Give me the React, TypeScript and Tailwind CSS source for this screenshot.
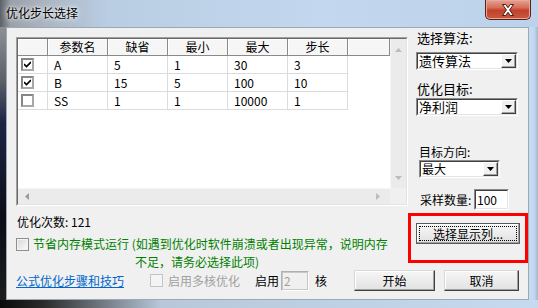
import React from "react";

const cols = [30, 60, 60, 60, 60, 60];
const headers = ["", "参数名", "缺省", "最小", "最大", "步长"];
const rows = [
  { checked: true, v: ["A", "5", "1", "30", "3"] },
  { checked: true, v: ["B", "15", "5", "100", "10"] },
  { checked: false, v: ["SS", "1", "1", "10000", "1"] },
];

function ListCheck({ checked }: { checked: boolean }) {
  return (
    <div className="w-[13px] h-[13px] border-2 border-[#868686] border-b-[#a8a8a8] border-r-[#a8a8a8] bg-white flex items-center justify-center">
      {checked && (
        <svg width="7" height="7" viewBox="0 0 7 7">
          <path d="M0 3 L2.5 5.5 L7 1" stroke="#000" strokeWidth="1.6" fill="none" />
        </svg>
      )}
    </div>
  );
}

function Select({ value, className, big }: { value: string; className: string; big?: boolean }) {
  return (
    <div className={`h-[18px] flex border border-[#8a8a8a] border-b-white border-r-white ${className}`}>
      <div className="flex-1 flex border border-[#404040] border-b-[#e3e3e3] border-r-[#e3e3e3] bg-white">
        <div className={`flex-1 pl-[1px] leading-[14px] ${big ? "text-[13px]" : "text-[12px]"}`}>{value}</div>
        <div className="w-[15px] h-[14px] bg-[#f0f0f0] border border-white border-b-[#404040] border-r-[#404040] flex items-center justify-center shadow-[inset_-1px_-1px_0_#a0a0a0]">
          <svg width="7" height="4" viewBox="0 0 7 4">
            <path d="M0 0 H7 L3.5 4 Z" fill="#000" />
          </svg>
        </div>
      </div>
    </div>
  );
}

function Btn({ children, className }: { children: React.ReactNode; className: string }) {
  return (
    <div
      className={`h-[21px] flex items-center justify-center text-[12px] leading-[14px] border border-[#d8d8d8] border-b-[#404040] border-r-[#404040] shadow-[inset_-1px_-1px_0_#a0a0a0,inset_1px_1px_0_#ffffff] bg-[linear-gradient(to_bottom,#f6f6f6_0%,#ececec_50%,#e2e2e2_100%)] ${className}`}
    >
      {children}
    </div>
  );
}

export default function App() {
  return (
    <div className="w-[538px] h-[308px] flex flex-col overflow-hidden font-['Noto_Sans_CJK_SC',sans-serif] text-[12px] text-black">
      {/* Title bar */}
      <div className="h-[27px] flex items-start bg-[linear-gradient(to_right,#5c6068_0%,#9aa0a8_2%,#aab4c0_8%,#b9cde3_20%,#c3d8ee_60%,#bcd2ea_100%)]">
        <div className="ml-[6px] mt-[6px] text-[12px] leading-[14px] [text-shadow:0_0_6px_#ffffff,0_0_3px_#ffffff]">
          优化步长选择
        </div>
        <div className="ml-auto mr-[7px] w-[46px] h-[20px] rounded-b-[5px] border border-t-0 border-[#5b1f17] bg-[linear-gradient(to_bottom,#e3a493_0%,#d66d58_40%,#c2402a_55%,#c85a42_100%)] shadow-[inset_0_0_0_1px_#e9a898] flex items-center justify-center">
          <svg width="14" height="12" viewBox="0 0 14 12">
            <path
              d="M1.5 0.5h3.2l2.3 3.2 2.3-3.2h3.2l-3.9 5.5 3.9 5.5h-3.2l-2.3-3.2-2.3 3.2h-3.2l3.9-5.5z"
              fill="#ffffff"
              stroke="#4a1c14"
              strokeWidth="1"
            />
          </svg>
        </div>
      </div>

      <div className="flex flex-1">
        <div className="w-[6px] bg-[linear-gradient(to_bottom,#8c9096_0%,#5a5f68_20%,#1c2446_35%,#0b0e18_70%,#1c1c1c_100%)]" />

        {/* Client area */}
        <div className="w-[523px] border border-[#9aa8b8] bg-[#f0f0f0] flex flex-col pl-[9px]">
          {/* Top section */}
          <div className="flex items-start">
            {/* List view */}
            <div className="mt-[9px] w-[392px] h-[169px] border border-[#a0a0a0] border-b-white border-r-white">
              <div className="w-full h-full border border-[#696969] border-b-[#e3e3e3] border-r-[#e3e3e3] flex flex-col bg-white">
                <div className="flex flex-1 min-h-0">
                  <div className="w-[372px] flex flex-col">
                    <div className="h-[17px] flex bg-[#f6f6f6] border-b border-[#8a8a8a]">
                      {headers.map((h, i) => (
                        <div
                          key={i}
                          style={{ width: cols[i] }}
                          className="h-full flex items-center justify-center border-r border-[#8a8a8a] shadow-[inset_1px_1px_0_#ffffff] leading-[14px]"
                        >
                          {h}
                        </div>
                      ))}
                      <div className="flex-1 h-full border-r border-[#8a8a8a] shadow-[inset_1px_1px_0_#ffffff]" />
                    </div>
                    {rows.map((r, ri) => (
                      <div key={ri} className="h-[18px] flex">
                        <div className="w-[30px] h-full border-r border-b border-[#dcdcdc] flex items-center pl-[3px]">
                          <ListCheck checked={r.checked} />
                        </div>
                        {r.v.map((c, ci) => (
                          <div
                            key={ci}
                            className="w-[60px] h-full border-r border-b border-[#dcdcdc] pl-[6px] leading-[17px]"
                          >
                            {c}
                          </div>
                        ))}
                      </div>
                    ))}
                  </div>
                  <div className="w-[16px] bg-[#ebebeb] border-l border-[#f6f6f6] flex flex-col justify-between items-center pt-[9px] pb-[8px]">
                    <svg width="7" height="4" viewBox="0 0 7 4">
                      <path d="M0 4 H7 L3.5 0 Z" fill="#bcbcbc" />
                    </svg>
                    <svg width="7" height="4" viewBox="0 0 7 4">
                      <path d="M0 0 H7 L3.5 4 Z" fill="#bcbcbc" />
                    </svg>
                  </div>
                </div>
                <div className="h-[16px] flex">
                  <div className="w-[372px] bg-[#ebebeb] border-t border-[#f6f6f6] flex items-center justify-between pl-[7px] pr-[10px]">
                    <svg width="4" height="7" viewBox="0 0 4 7">
                      <path d="M4 0 V7 L0 3.5 Z" fill="#9a9a9a" />
                    </svg>
                    <svg width="4" height="7" viewBox="0 0 4 7">
                      <path d="M0 0 V7 L4 3.5 Z" fill="#bcbcbc" />
                    </svg>
                  </div>
                  <div className="w-[16px] bg-[#f0f0f0]" />
                </div>
              </div>
            </div>

            {/* Right panel */}
            <div className="ml-[8px] w-[105px] flex flex-col pt-[3px]">
              <div className="h-[14px] leading-[14px] text-[13px] pl-[1px]">选择算法:</div>
              <Select value="遗传算法" big className="mt-[7px] w-[102px]" />
              <div className="mt-[12px] h-[14px] leading-[14px] text-[13px] pl-[1px]">优化目标:</div>
              <Select value="净利润" big className="mt-[2px] w-[102px]" />
              <div className="mt-[30px] h-[12px] leading-[12px] pl-[3px]">目标方向:</div>
              <Select value="最大" className="mt-[2px] ml-[3px] w-[81px]" />
              <div className="mt-[11px] h-[21px] flex items-center">
                <div className="w-[58px] pl-[4px] leading-[14px]">采样数量:</div>
                <div className="w-[35px] h-[21px] flex border border-[#8a8a8a] border-b-white border-r-white">
                  <div className="flex-1 border border-[#404040] border-b-[#e3e3e3] border-r-[#e3e3e3] bg-white pl-[1px] leading-[17px]">
                    100
                  </div>
                </div>
              </div>
            </div>
          </div>

          {/* Middle section */}
          <div className="flex items-start">
            <div className="w-[392px] flex flex-col">
              <div className="mt-[6px] h-[12px] leading-[12px] pl-[1px]">
                优化次数: 121
              </div>
              <div className="mt-[6px] flex items-start">
                <div className="mt-[4px] w-[13px] h-[13px] border border-[#8f8f8f] bg-[linear-gradient(135deg,#d8d8d8,#fbfbfb)] shadow-[inset_0_0_0_1px_#f4f4f4]" />
                <div className="ml-[4px] flex flex-col text-[#008000]">
                  <div className="h-[19px] leading-[19px] whitespace-nowrap">
                    节省内存模式运行 (如遇到优化时软件崩溃或者出现异常，说明内存
                  </div>
                  <div className="h-[17px] leading-[17px] pl-[102px] whitespace-nowrap">
                    不足，请务必选择此项)
                  </div>
                </div>
              </div>
            </div>
            <div className="mt-[3px] w-[120px] h-[50px] border-[3px] border-[#ff0000] flex flex-col items-start pl-[5px] pt-[7px]">
              <div className="w-[104px] h-[21px] border border-[#5a5a5a] bg-[linear-gradient(to_bottom,#f6f6f6_0%,#ececec_50%,#e0e0e0_100%)] shadow-[inset_-1px_-1px_0_#a0a0a0,inset_1px_1px_0_#ffffff] p-[2px] flex">
                <div className="flex-1 border border-dotted border-black flex items-center justify-center leading-[14px]">
                  选择显示列...
                </div>
              </div>
            </div>
          </div>

          {/* Bottom row */}
          <div className="h-[21px] flex items-center">
            <div className="text-[#0066cc] underline leading-[14px] whitespace-nowrap">公式优化步骤和技巧</div>
            <div className="ml-[26px] w-[13px] h-[13px] border border-[#c4c4c4] bg-[#f4f4f4]" />
            <div className="ml-[5px] text-[#a0a0a0] leading-[14px] whitespace-nowrap">启用多核优化</div>
            <div className="ml-[15px] leading-[14px]">启用</div>
            <div className="ml-[2px] w-[28px] h-[20px] flex border border-[#b0b0b0] border-b-white border-r-white">
              <div className="flex-1 border border-[#c8c8c8] bg-[#f0f0f0] text-[#a0a0a0] pl-[1px] leading-[16px]">2</div>
            </div>
            <div className="ml-[6px] leading-[14px]">核</div>
            <Btn className="ml-[27px] w-[81px]">开始</Btn>
            <Btn className="ml-[9px] w-[75px]">取消</Btn>
          </div>
        </div>

        <div className="w-[9px] bg-[linear-gradient(to_right,#c9dcf0_0%,#c2d7ee_60%,#9fb6d0_100%)]" />
      </div>
      <div className="h-[8px] bg-[linear-gradient(to_right,#0a0a0a_0%,#2a2a2a_8%,#b8c8da_30%,#c6daef_100%)]" />
    </div>
  );
}
